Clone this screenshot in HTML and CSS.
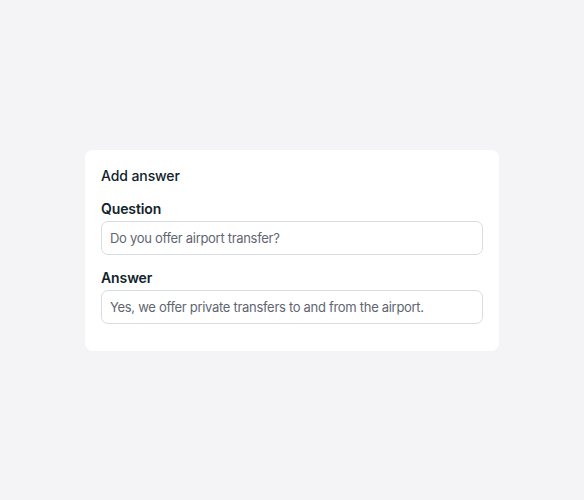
FILE: index.html
```html
<!DOCTYPE html>
<html lang="en">
<head>
    <meta charset="UTF-8">
    <meta name="viewport" content="width=device-width, initial-scale=1.0">
    <title>Add answer</title>
    <link rel="stylesheet" href="styles.css">
</head>
<body>
    <div class="card">
        <h3 class="card-title">Add answer</h3>
        <div class="field">
            <label class="field-label" for="question">Question</label>
            <input type="text" id="question" class="text-input" value="Do you offer airport transfer?">
        </div>
        <div class="field">
            <label class="field-label" for="answer">Answer</label>
            <input type="text" id="answer" class="text-input" value="Yes, we offer private transfers to and from the airport.">
        </div>
    </div>
</body>
</html>
```

FILE: styles.css
```css
* {
    padding: 0;
    margin: 0;
    box-sizing: border-box;
}
body {
    font-family: Inter, "Noto Sans", sans-serif;
    display: flex;
    justify-content: center;
    align-items: center;
    min-height: 100vh;
    background-color: #f4f4f6;
    color: #10232b;
}
.card {
    width: 414px;
    background-color: #fff;
    border-radius: 8px;
    padding: 16px 16px 27px;
    display: flex;
    flex-direction: column;
    gap: 13px;
}
.card-title {
    font-size: 14px;
    font-weight: 500;
    line-height: 20px;
    letter-spacing: -0.1px;
}
.field {
    display: flex;
    flex-direction: column;
    gap: 2px;
}
.field-label {
    font-size: 14px;
    font-weight: 600;
    line-height: 20px;
    letter-spacing: -0.1px;
}
.text-input {
    width: 100%;
    height: 34px;
    padding: 0 8px;
    border: 1px solid #d8dce3;
    border-radius: 7px;
    font-family: inherit;
    font-size: 13px;
    letter-spacing: -0.3px;
    color: #5f6670;
    background: #fff;
    outline: none;
}
```
